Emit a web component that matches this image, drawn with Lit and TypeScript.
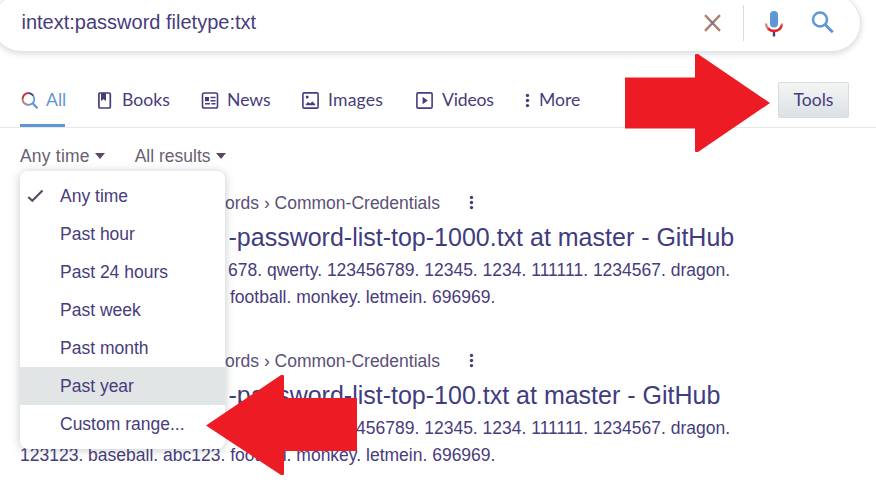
import { LitElement, html, svg, css } from "lit";
import { customElement } from "lit/decorators.js";
import { classMap } from "lit/directives/class-map.js";

const icons: Record<string, unknown> = {
  all: svg`<circle cx="8.4" cy="7" r="5.9" fill="none" stroke="#5f96d6" stroke-width="1.7"/><path d="M2.5 7A5.900 5.900 0 0 1 8.400 1.100" fill="none" stroke="#e8202a" stroke-width="1.7"/><path d="M8.400 12.900A5.900 5.900 0 0 1 2.500 7" fill="none" stroke="#c08870" stroke-width="1.7"/><path d="M8.400 1.100A5.900 5.900 0 0 1 13.200 3.600" fill="none" stroke="#483c7c" stroke-width="1.7"/><path d="M12.400 11.1L17.500 16.3" stroke="#5f96d6" stroke-width="2.2"/>`,
  books: svg`<rect x="2.900" y="1" width="11.400" height="15" rx="1" fill="none" stroke="#483c7c" stroke-width="1.700"/><path d="M5 1h5v8L7.500 7.200 5 9z" fill="#483c7c"/>`,
  news: svg`<rect x="1.500" y="1" width="15" height="15" rx="1.8" fill="none" stroke="#483c7c" stroke-width="1.6"/><path d="M4 5h4v4.2h-4z" fill="#483c7c"/><path d="M9.500 5.5h5M9.500 8.7h5M4 11.7h5M10.500 11.7h4" stroke="#483c7c" stroke-width="1.4"/>`,
  images: svg`<rect x=".9" y=".9" width="15.2" height="15.2" rx="1.2" fill="none" stroke="#483c7c" stroke-width="1.6"/><circle cx="5.2" cy="5" r="1.5" fill="#483c7c"/><path d="M3.8 13.2v-1l2.3-2.1 2 1.3 2.3-2 2.8 2.8v1z" fill="#483c7c"/>`,
  videos: svg`<rect x=".9" y=".9" width="15.2" height="15.2" rx="1.2" fill="none" stroke="#483c7c" stroke-width="1.6"/><path d="M6.6 4.8v7.4L11.8 8.5z" fill="#483c7c"/>`,
  more: svg`<circle cx="2.5" cy="3.4" r="1.7" fill="#483c7c"/><circle cx="2.5" cy="8.5" r="1.7" fill="#483c7c"/><circle cx="2.5" cy="13.6" r="1.7" fill="#483c7c"/>`,
};

const tabs = [
  ["all", "All"],
  ["books", "Books"],
  ["news", "News"],
  ["images", "Images"],
  ["videos", "Videos"],
  ["more", "More"],
];

const ranges = ["Any time", "Past hour", "Past 24 hours", "Past week", "Past month", "Past year", "Custom range..."];

@customElement("search-bar")
class SearchBar extends LitElement {
  static styles = css`
    :host { display: flow-root; height: 72px; }
    .bar { box-sizing: border-box; width: 869px; height: 58px; margin: -6px 0 0 -8px; border-radius: 29px; border: 1px solid #dfe4e8; background: #fff; box-shadow: 0 2px 5px 1px rgba(60, 70, 80, 0.15); display: flex; align-items: center; padding: 0 26px 0 28.5px; }
    .query { flex: 1; font-size: 20px; color: #483c7c; white-space: pre; padding-bottom: 1px; }
    .sep { width: 1px; height: 36px; background: #d3dce4; margin: 0 20px 1px 21px; }
    svg { display: block; }
    .glass { margin-left: 27px; margin-bottom: 1px; }
  `;
  render() {
    return html`<div class="bar">
      <span class="query">intext:password filetype:txt</span>
      <svg width="19" height="18" viewBox="0 0 19 18"><path d="M2 1.2L17 16.8M17 1.2L2 16.8" stroke="#b0806e" stroke-width="2.4"/><path d="M8 7.5l3 3M11 7.5l-3 3" stroke="#5c78aa" stroke-width="1.4"/></svg>
      <div class="sep"></div>
      <svg width="20" height="27" viewBox="0 0 20 27"><rect x="6" y="1" width="8" height="16.5" rx="4" fill="#5f96d6"/><path d="M2 13.5c.2 4.7 3.5 7.5 8 7.5s7.800-2.800 8-7.500" fill="none" stroke="#c08870" stroke-width="2.300"/><path d="M4 18.200c1.500 1.900 3.600 2.800 6 2.800 4 0 6.700-2.200 7.600-5.500" fill="none" stroke="#e8202a" stroke-width="2.300"/><path d="M10 22v4.500" stroke="#483c7c" stroke-width="2.400"/></svg>
      <svg class="glass" width="23" height="23" viewBox="0 0 23 23"><circle cx="9" cy="8.500" r="7" fill="none" stroke="#5f96d6" stroke-width="2.500"/><path d="M14 13.500L21.800 21.300" stroke="#5f96d6" stroke-width="2.900"/></svg>
    </div>`;
  }
}

@customElement("search-tabs")
class SearchTabs extends LitElement {
  static styles = css`
    :host { display: block; }
    nav { box-sizing: border-box; height: 56px; border-bottom: 1px solid #e6e8ea; display: flex; padding-left: 20px; font-family: Lato, sans-serif; font-size: 17.6px; color: #483c7c; }
    .tab { box-sizing: border-box; height: 55px; display: flex; align-items: center; white-space: nowrap; padding-top: 1px; }
    .tab svg { display: block; flex: none; margin-right: 8px; width: 18px; height: 17px; }
    .tab span { padding-bottom: 2px; }
    .all { width: 45px; margin-right: 31px; color: #5f96d6; border-bottom: 3px solid #5f96d6; padding-top: 4px; }
    .books { width: 105px; }
    .news { width: 101px; }
    .images { width: 114px; }
    .videos { width: 109px; }
    .more { width: 60px; }
    .tab.more svg { width: 5px; margin-right: 9px; }
    .images span { letter-spacing: 0.2px; }
    .videos span { letter-spacing: -0.2px; }
    .tools { box-sizing: border-box; width: 71px; height: 36px; margin: 10px 0 0 193px; border: 1px solid #d5dde3; border-radius: 2px; background: linear-gradient(#f4f5f4, #dbe1e6); display: flex; align-items: center; justify-content: center; padding-bottom: 1px; }
  `;
  render() {
    return html`<nav>
      ${tabs.map(([id, label]) => html`<div class=${classMap({ tab: true, [id]: true })}>
        <svg viewBox=${id === "more" ? "0 0 5 17" : "0 0 18 17"}>${icons[id]}</svg><span>${label}</span>
      </div>`)}
      <div class="tools">Tools</div>
    </nav>`;
  }
}

@customElement("search-result")
class SearchResult extends LitElement {
  static properties = { heading: { type: String }, second: { type: String }, indent: { type: Boolean } };
  declare heading: string;
  declare second: string;
  declare indent: boolean;
  static styles = css`
    :host { display: block; height: 158px; white-space: nowrap; font-size: 17.5px; color: #483c7c; }
    .crumb { display: flex; align-items: center; height: 28px; color: #5a5078; padding-left: 205px; }
    .crumb svg { margin-left: 29px; margin-bottom: 1px; }
    .title { font-size: 25px; line-height: 40px; color: #403c80; padding-left: 208.5px; }
    .line { line-height: 27px; }
    .first { padding-left: 208px; }
    .indent { padding-left: 210px; }
  `;
  render() {
    return html`
      <div class="crumb"><span>ords › Common-Credentials</span>
        <svg width="5" height="17" viewBox="0 0 5 17">${icons.more}</svg></div>
      <div class="title">${this.heading}</div>
      <div class="line first">678. qwerty. 123456789. 12345. 1234. 111111. 1234567. dragon.</div>
      <div class=${classMap({ line: true, indent: this.indent })}>${this.second}</div>`;
  }
}

@customElement("range-menu")
class RangeMenu extends LitElement {
  static styles = css`
    :host { display: block; box-sizing: border-box; width: 205px; padding: 6px 0; border-radius: 8px; background: #fff; box-shadow: 0 1px 9px 1px rgba(70, 80, 90, 0.26); font-size: 17.5px; color: #483c7c; }
    .item { display: flex; align-items: center; height: 38px; }
    .mark { width: 33px; padding-left: 7px; display: flex; }
    .hover { background: #e1e5e6; }
  `;
  render() {
    return html`${ranges.map((label, i) => html`<div class=${classMap({ item: true, hover: i === 5 })}>
      <span class="mark">${i === 0 ? html`<svg width="17" height="14" viewBox="0 0 17 14"><path d="M1.300 8L5.300 11.800L15.500 1.500" fill="none" stroke="#5c4c66" stroke-width="2.200"/></svg>` : null}</span>
      <span>${label}</span></div>`)}`;
  }
}

@customElement("app-root")
class AppRoot extends LitElement {
  static styles = css`
    :host { display: block; position: relative; width: 876px; height: 497px; overflow: hidden; background: #fff; font-family: "Liberation Sans", Arial, sans-serif; }
    .filters { display: flex; height: 61px; padding-left: 20px; gap: 30px; color: #6a6070; font-size: 17.5px; letter-spacing: 0.2px; }
    .filter { display: flex; align-items: center; height: 56px; gap: 5px; white-space: nowrap; }
    .filter + .filter { letter-spacing: 0; }
    .results { padding-left: 20px; }
    range-menu { position: absolute; left: 20px; top: 171px; }
    .arrow { position: absolute; }
    .right { left: 625px; top: 54px; }
    .left { left: 206px; top: 375px; }
  `;
  render() {
    const caret = html`<svg width="10" height="6" viewBox="0 0 10 6"><path d="M0 0h10L5 6z" fill="#5c4668"/></svg>`;
    return html`
      <search-bar></search-bar>
      <search-tabs></search-tabs>
      <div class="filters">
        <div class="filter"><span>Any time</span>${caret}</div>
        <div class="filter"><span>All results</span>${caret}</div>
      </div>
      <div class="results">
        <search-result indent heading="-password-list-top-1000.txt at master - GitHub" second="football. monkey. letmein. 696969."></search-result>
        <search-result heading="-password-list-top-100.txt at master - GitHub" second="123123. baseball. abc123. football. monkey. letmein. 696969."></search-result>
      </div>
      <range-menu></range-menu>
      <svg class="arrow right" width="146" height="98" viewBox="0 0 146 98"><path d="M0 23.500h70V1q0-1 1-1h2L145 49 73 98h-2q-1 0-1-1V74.500H0z" fill="#ed1c24"/></svg>
      <svg class="arrow left" width="151" height="100" viewBox="0 0 151 100"><path d="M151 23H78V1q0-1-1-1h-2L0 50.500 75 100h2q1 0 1-1V76h73z" fill="#ed1c24"/></svg>`;
  }
}
